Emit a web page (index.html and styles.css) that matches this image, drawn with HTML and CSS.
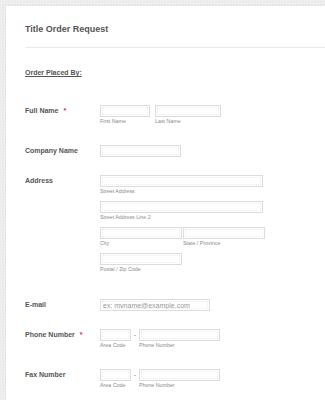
FILE: index.html
```html
<!DOCTYPE html>
<html lang="en">
<head>
    <meta charset="UTF-8">
    <title>Title Order Request</title>
    <link rel="stylesheet" href="styles.css">
</head>
<body>
    <div class="form-card">
        <h1 class="form-title">Title Order Request</h1>
        <div class="form-divider"></div>
        <p class="form-section">Order Placed By:</p>

        <div class="form-line">
            <label class="form-label">Full Name <span class="required">*</span></label>
            <div class="field-row">
                <div class="sub">
                    <input class="w-first" type="text">
                    <span class="sub-label">First Name</span>
                </div>
                <div class="sub">
                    <input class="w-last" type="text">
                    <span class="sub-label">Last Name</span>
                </div>
            </div>
        </div>

        <div class="form-line">
            <label class="form-label">Company Name</label>
            <input class="w-company" type="text">
        </div>

        <div class="form-line address">
            <label class="form-label">Address</label>
            <div class="field-stack">
                <div class="sub">
                    <input class="w-street" type="text">
                    <span class="sub-label">Street Address</span>
                </div>
                <div class="sub">
                    <input class="w-street" type="text">
                    <span class="sub-label">Street Address Line 2</span>
                </div>
                <div class="field-row tight">
                    <div class="sub">
                        <input class="w-half" type="text">
                        <span class="sub-label">City</span>
                    </div>
                    <div class="sub">
                        <input class="w-half" type="text">
                        <span class="sub-label">State / Province</span>
                    </div>
                </div>
                <div class="sub">
                    <input class="w-half" type="text">
                    <span class="sub-label">Postal / Zip Code</span>
                </div>
            </div>
        </div>

        <div class="form-line">
            <label class="form-label">E-mail</label>
            <input class="w-email" type="text" placeholder="ex: myname@example.com">
        </div>

        <div class="form-line">
            <label class="form-label">Phone Number <span class="required">*</span></label>
            <div class="field-row phone">
                <div class="sub">
                    <input class="w-area" type="text">
                    <span class="sub-label">Area Code</span>
                </div>
                <span class="dash">-</span>
                <div class="sub">
                    <input class="w-phone" type="text">
                    <span class="sub-label">Phone Number</span>
                </div>
            </div>
        </div>

        <div class="form-line">
            <label class="form-label">Fax Number</label>
            <div class="field-row phone">
                <div class="sub">
                    <input class="w-area" type="text">
                    <span class="sub-label">Area Code</span>
                </div>
                <span class="dash">-</span>
                <div class="sub">
                    <input class="w-phone" type="text">
                    <span class="sub-label">Phone Number</span>
                </div>
            </div>
        </div>
    </div>
</body>
</html>
```

FILE: styles.css
```css
html, body {
    height: 100%;
}

body {
    margin: 0;
    padding: 6px 0 0 6px;
    box-sizing: border-box;
    overflow: hidden;
    font-family: "Liberation Sans", Arial, sans-serif;
    color: #555;
    background-color: #ececec;
    background-image: repeating-conic-gradient(#f1f1f1 0 25%, #e8e8e8 0 50%);
    background-size: 3px 3px;
}

.form-card {
    height: 100%;
    overflow: hidden;
    background: #fff;
    box-shadow: 0 0 2px rgba(0, 0, 0, 0.1);
    padding: 17px 0 0 19px;
    box-sizing: border-box;
}

.form-title {
    margin: 0;
    font-size: 9px;
    line-height: 12px;
    font-weight: bold;
    color: #555;
}

.form-divider {
    margin-top: 12px;
    border-top: 1px solid #e9e9e9;
}

.form-section {
    margin: 20px 0 27px;
    font-size: 7px;
    line-height: 10px;
    font-weight: bold;
    text-decoration: underline;
}

.form-line {
    display: flex;
    align-items: flex-start;
    padding-bottom: 18px;
}

.form-line.address {
    padding-bottom: 24px;
}

.form-label {
    width: 75px;
    flex: none;
    font-size: 7px;
    line-height: 12px;
    font-weight: bold;
    color: #555;
}

.required {
    color: #e03030;
    margin-left: 3px;
}

.field-row {
    display: flex;
    gap: 5px;
}

.field-row.tight {
    gap: 1px;
}

.field-row.phone {
    gap: 0;
}

.field-stack {
    display: flex;
    flex-direction: column;
    gap: 4px;
}

.sub {
    display: flex;
    flex-direction: column;
}

input {
    height: 12px;
    box-sizing: border-box;
    margin: 0;
    padding: 0 2px;
    border: 1px solid #dcdcdc;
    border-radius: 0;
    outline: 1px dotted #ececec;
    outline-offset: -3px;
    background: #fff;
    font-family: "Liberation Sans", Arial, sans-serif;
    font-size: 7px;
    color: #555;
}

input::placeholder {
    color: #999;
}

.sub-label {
    font-size: 5.3px;
    line-height: 8px;
    padding-bottom: 2px;
    color: #8a8a8a;
}

.dash {
    width: 8px;
    text-align: center;
    font-size: 7px;
    line-height: 12px;
    color: #888;
}

.w-first { width: 50px; }
.w-last { width: 66px; }
.w-company { width: 81px; }
.w-street { width: 163px; }
.w-half { width: 82px; }
.w-email { width: 110px; }
.w-area { width: 31px; }
.w-phone { width: 81px; }
```
